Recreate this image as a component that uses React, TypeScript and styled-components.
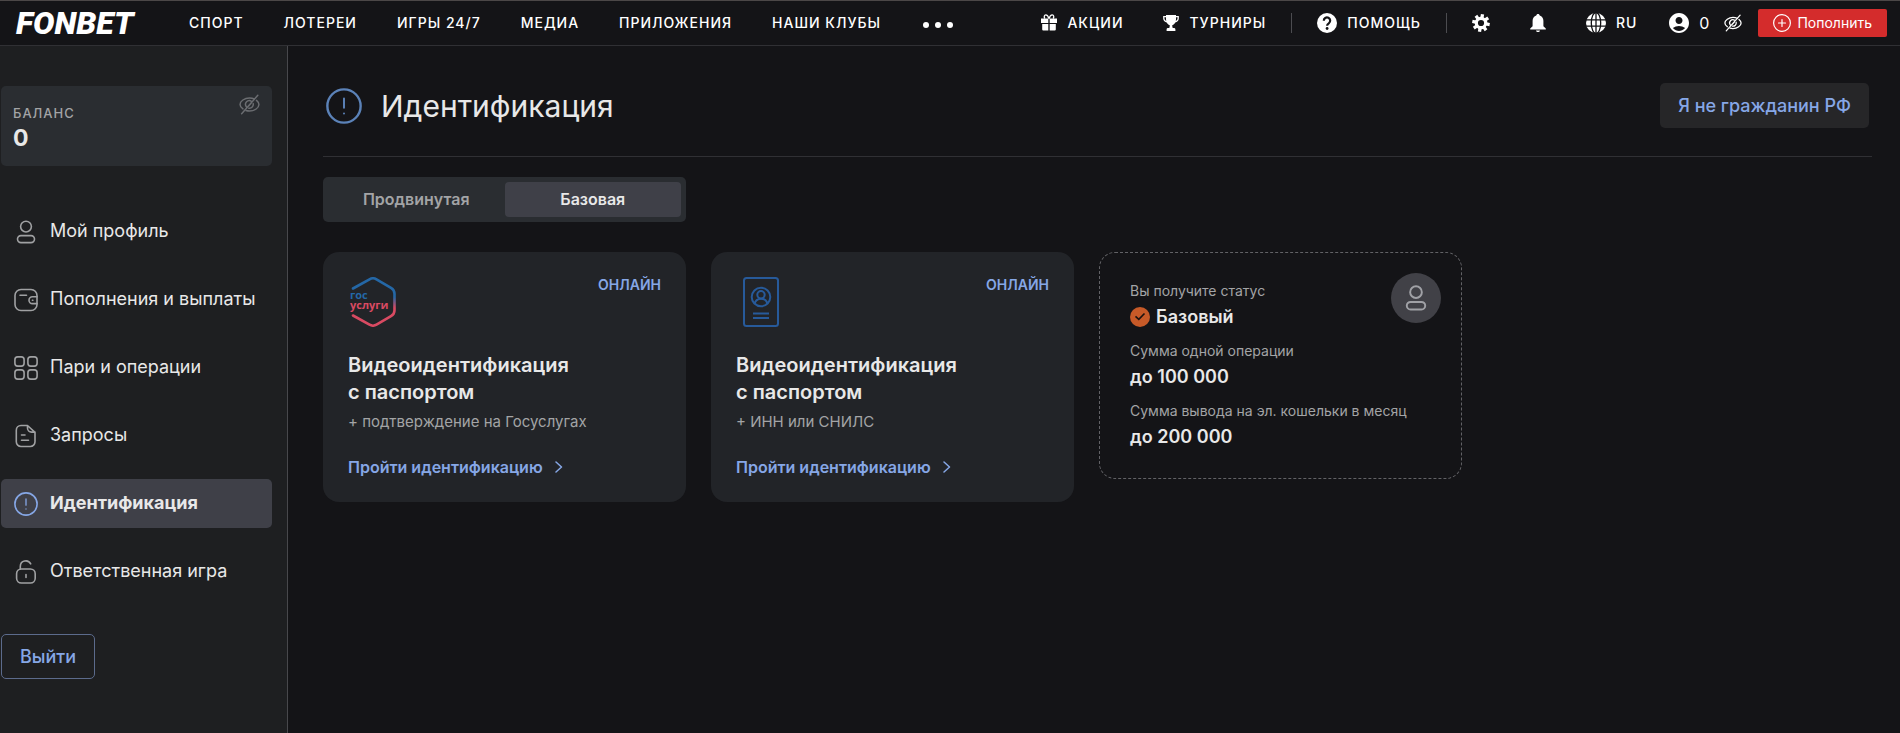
import React from 'react';
import styled, { createGlobalStyle } from 'styled-components';
import { MdAccountCircle } from 'react-icons/md';

const c = {
  page: '#141417',
  side: '#1e1f21',
  card: '#222428',
  panel: '#2a2d31',
  active: '#3f4048',
  line: '#303034',
  text: '#e8e8e8',
  muted: '#a3a4a6',
  blue: '#86a7e6',
  red: '#d42c2c',
};

const GlobalStyle = createGlobalStyle`
  *, *::before, *::after { box-sizing: border-box; }
  body { margin: 0; background: ${c.page}; color: ${c.text}; font-family: Inter, "Noto Sans", sans-serif; }
  h1, h2, p, ul, dl, dd { margin: 0; padding: 0; }
  ul { list-style: none; }
  button { font-family: inherit; border: 0; background: none; padding: 0; cursor: pointer; }
  a { color: inherit; text-decoration: none; }
  svg { display: block; flex: none; }
`;

const Page = styled.div`
  min-height: 100vh;
  display: flex;
  flex-direction: column;
`;

const Header = styled.header`
  display: flex;
  align-items: center;
  height: 46px;
  padding: 0 13px 1px 16px;
  border-top: 1px solid #4b4747;
  border-bottom: 1px solid ${c.line};
  color: #fff;
  white-space: nowrap;
`;

const Logo = styled.a`
  width: 153px;
  font-family: Roboto, sans-serif;
  font-size: 32px;
  line-height: 36px;
  font-weight: 900;
  font-style: italic;
`;

const NavList = styled.ul`
  display: flex;
  align-items: center;
`;

const NavLink = styled.a`
  display: flex;
  align-items: center;
  gap: 10px;
  height: 42px;
  padding: 0 20px;
  font-size: 14px;
  line-height: 20px;
  font-weight: 500;
  letter-spacing: 1px;
`;

const MoreButton = styled.button`
  display: flex;
  padding: 4px 22px 0;
  color: #fff;
`;

const Tools = styled.div`
  display: flex;
  align-items: center;
  margin-left: auto;
`;

const Divider = styled.span`
  width: 1px;
  height: 20px;
  margin: 0 5px;
  background: #4c4c50;
`;

const IconButton = styled.button`
  display: flex;
  padding: 0 20px;
  color: #fff;
`;

const Account = styled.div`
  display: flex;
  align-items: center;
  gap: 8px;
  padding: 0 15px 0 10px;
  font-size: 16px;
`;

const BareButton = styled.button<{ $tone?: string }>`
  display: flex;
  color: ${(p) => p.$tone || '#fff'};
`;

const DepositButton = styled.button`
  display: flex;
  align-items: center;
  gap: 6px;
  height: 28px;
  margin-left: 16px;
  padding: 0 15px;
  border-radius: 2px;
  background: ${c.red};
  color: #fff;
  font-size: 14px;
  font-weight: 400;
`;

const Body = styled.div`
  flex: 1;
  display: flex;
`;

const Sidebar = styled.aside`
  flex: 0 0 288px;
  padding: 40px 15px 40px 1px;
  background: ${c.side};
  border-right: 1px solid #48484c;
`;

const Balance = styled.section`
  display: flex;
  justify-content: space-between;
  align-items: flex-start;
  height: 80px;
  padding: 8px 12px;
  border-radius: 5px;
  background: ${c.panel};
`;

const BalanceText = styled.div`
  padding-top: 10px;
`;

const BalanceLabel = styled.p`
  font-size: 13px;
  line-height: 18px;
  font-weight: 500;
  letter-spacing: 1px;
  color: ${c.muted};
`;

const BalanceValue = styled.p`
  font-size: 23px;
  line-height: 32px;
  font-weight: 700;
`;

const Menu = styled.ul`
  display: flex;
  flex-direction: column;
  gap: 19px;
  margin: 41px 0 38px;
`;

const MenuLink = styled.a<{ $active?: boolean }>`
  display: flex;
  align-items: center;
  gap: 12px;
  height: 49px;
  padding: 0 13px;
  border-radius: 5px;
  background: ${(p) => (p.$active ? c.active : 'transparent')};
  font-size: 18px;
  font-weight: ${(p) => (p.$active ? 700 : 400)};
  svg { color: ${(p) => (p.$active ? c.blue : '#a0a1a3')}; }
`;

const MenuLabel = styled.span`
  padding-bottom: 2px;
  line-height: 24px;
`;

const LogoutButton = styled.button`
  height: 45px;
  padding: 0 18px;
  border: 1px solid #5c6b8c;
  border-radius: 5px;
  color: ${c.blue};
  font-size: 18px;
  font-weight: 500;
`;

const Main = styled.main`
  flex: 1;
  min-width: 0;
  padding: 0 28px 40px 35px;
`;

const TitleBar = styled.div`
  display: flex;
  align-items: center;
  gap: 19px;
  height: 111px;
  padding: 9px 3px 0;
  border-bottom: 1px solid ${c.line};
  svg { color: #5b82b8; }
`;

const Title = styled.h1`
  font-size: 30px;
  line-height: 36px;
  font-weight: 400;
`;

const SoftButton = styled.button`
  height: 45px;
  margin-left: auto;
  padding: 0 18px;
  border-radius: 5px;
  background: #262628;
  color: ${c.blue};
  font-size: 18px;
  font-weight: 500;
`;

const Tabs = styled.div`
  display: grid;
  grid-template-columns: 1fr 1fr;
  max-width: 363px;
  height: 45px;
  margin: 20px 0 30px;
  padding: 5px;
  border-radius: 5px;
  background: ${c.panel};
`;

const Tab = styled.button<{ $active?: boolean }>`
  padding-bottom: 2px;
  border-radius: 4px;
  background: ${(p) => (p.$active ? c.active : 'transparent')};
  color: ${(p) => (p.$active ? c.text : c.muted)};
  font-size: 16px;
  font-weight: 600;
`;

const Cards = styled.div`
  display: grid;
  grid-template-columns: repeat(3, minmax(0, 363px));
  align-items: start;
  gap: 25px;
`;

const Card = styled.article`
  height: 250px;
  padding: 25px;
  border-radius: 16px;
  background: ${c.card};
`;

const CardTop = styled.div`
  display: flex;
  justify-content: space-between;
  align-items: flex-start;
  height: 75px;
`;

const Badge = styled.span`
  font-size: 14px;
  line-height: 16px;
  font-weight: 600;
  color: ${c.blue};
`;

const CardTitle = styled.h2`
  font-size: 20px;
  line-height: 27px;
  font-weight: 600;
`;

const CardNote = styled.p`
  margin-top: 6px;
  font-size: 15px;
  line-height: 20px;
  color: ${c.muted};
`;

const CardLink = styled.a`
  display: flex;
  align-items: center;
  gap: 12px;
  margin-top: 25px;
  font-size: 16px;
  line-height: 20px;
  font-weight: 600;
  color: ${c.blue};
`;

const StatusCard = styled.section`
  position: relative;
  height: 227px;
  padding: 28px 30px;
  border: 1px dashed #626266;
  border-radius: 16px;
`;

const FactLabel = styled.dt`
  font-size: 14px;
  line-height: 20px;
  color: ${c.muted};
`;

const FactValue = styled.dd`
  && { margin: 3px 0 11px; }
  display: flex;
  align-items: center;
  gap: 6px;
  font-size: 18px;
  line-height: 26px;
  font-weight: 600;
`;

const Avatar = styled.span`
  position: absolute;
  top: 20px;
  right: 20px;
  display: flex;
  align-items: center;
  justify-content: center;
  width: 50px;
  height: 50px;
  border-radius: 50%;
  background: #414147;
  color: #a0a1a6;
`;

type IconProps = { size?: number; w?: number };

const stroke = (w = 1.6) => ({
  fill: 'none',
  stroke: 'currentColor',
  strokeWidth: w,
  strokeLinecap: 'round' as const,
  strokeLinejoin: 'round' as const,
});

const UserIcon = ({ size = 24, w = 1.6 }: IconProps) => (
  <svg width={size} height={size} viewBox="0 0 24 24" {...stroke(w)}>
    <circle cx="12" cy="6.6" r="5.4" />
    <rect x="3.5" y="15.6" width="17" height="7" rx="3.5" />
  </svg>
);

const WalletIcon = () => (
  <svg width="24" height="24" viewBox="0 0 24 24" {...stroke()}>
    <rect x="1" y="1.5" width="22" height="21" rx="6" />
    <path d="M6 7.2h6.5M23 8.8h-4.6a3.4 3.4 0 0 0 0 6.8H23M18.4 12.2h.5" />
  </svg>
);

const GridIcon = () => (
  <svg width="24" height="24" viewBox="0 0 24 24" {...stroke()}>
    <rect x=".9" y=".9" width="9.2" height="9.2" rx="2.8" />
    <rect x="13.9" y=".9" width="9.2" height="9.2" rx="2.8" />
    <rect x=".9" y="13.9" width="9.2" height="9.2" rx="2.8" />
    <rect x="13.9" y="13.9" width="9.2" height="9.2" rx="2.8" />
  </svg>
);

const DocIcon = () => (
  <svg width="24" height="24" viewBox="0 0 24 24" {...stroke()}>
    <path d="M13.5 1.5H7A4.7 4.7 0 0 0 2.3 6.2v11.6A4.7 4.7 0 0 0 7 22.5h9.3a4.7 4.7 0 0 0 4.7-4.7V8.3zM13.5 1.5v2.6a4 4 0 0 0 4 4H21M7.5 11H11M7.5 16.2h7" />
  </svg>
);

const AlertIcon = ({ size = 24, w = 1.6 }: IconProps) => (
  <svg width={size} height={size} viewBox="0 0 24 24" {...stroke(w)}>
    <circle cx="12" cy="12" r="11.1" />
    <path d="M12 7v6.200M12 16.900v.1" strokeWidth="1.3" />
  </svg>
);

const LockIcon = () => (
  <svg width="24" height="24" viewBox="0 0 24 24" {...stroke()}>
    <rect x="2.6" y="9" width="18.6" height="14" rx="4.8" />
    <path d="M6.3 9V6.400a5.500 5.500 0 0 1 10.400-2.500M12 14.500v3" />
  </svg>
);

const HiddenIcon = ({ size = 20 }: IconProps) => (
  <svg width={size} height={size} viewBox="0 0 24 24" {...stroke(1.7)}>
    <path d="M20 7.300c1.700 1.400 2.800 3.100 2.800 4.700 0 3.700-5 7.500-10.800 7.500-1.400 0-2.800-.2-4-.6M4.500 17C2.400 15.600 1.200 13.700 1.200 12c0-3.700 5-7.500 10.800-7.500 2 0 3.900.4 5.500 1.200" />
    <path d="M8.400 14.500a4.300 4.300 0 0 1 5.800-6.200M16.200 11a4.300 4.300 0 0 1-5 5.200M21.500 1.500L3 22.500M13.800 10.600L11 13.600" />
  </svg>
);

const GiftIcon = () => (
  <svg width="16" height="17" viewBox="0 0 16 17" fill="currentColor">
    <path d="M0 4.500h7.300V9H0zM8.700 4.500H16V9H8.700zM1.200 10h6.100v6.500h-5a1.100 1.100 0 0 1-1.100-1.100zM8.700 10h6.100v5.400a1.100 1.100 0 0 1-1.100 1.100h-5z" />
    <path d="M7.800 4.600C7.200 2.300 6 .9 4.800.9 3.300.9 2.600 2.800 3.900 4.500M8.200 4.600C8.800 2.300 10 .9 11.200.9c1.500 0 2.200 1.900.9 3.600" fill="none" stroke="currentColor" strokeWidth="1.3" />
  </svg>
);

const TrophyIcon = () => (
  <svg width="16" height="16" viewBox="0 0 16 16" fill="currentColor">
    <path d="M3 0h10v4.500c0 2.800-1.700 5.200-3.900 5.900l.6 2.600h1.200c.9 0 1.500.6 1.500 1.400V16H3.600v-1.600c0-.8.6-1.400 1.500-1.400h1.200l.6-2.600C4.700 9.700 3 7.300 3 4.500z" />
    <path d="M3.500 1.700H.8v1.500c0 1.900 1.300 3.200 3.400 3.600M12.500 1.700h2.700v1.500c0 1.900-1.300 3.200-3.400 3.600" fill="none" stroke="currentColor" strokeWidth="1.300" />
  </svg>
);

const HelpIcon = () => (
  <svg width="20" height="20" viewBox="0 0 20 20">
    <circle cx="10" cy="10" r="10" fill="currentColor" />
    <path d="M6.800 7.800a3.200 3.200 0 1 1 5 2.500c-1 .7-1.700 1.200-1.700 2.400" fill="none" stroke={c.page} strokeWidth="2.200" />
    <circle cx="10.100" cy="15.500" r="1.400" fill={c.page} />
  </svg>
);

const GearIcon = () => (
  <svg width="18" height="18" viewBox="0 0 18 18" fill="none" stroke="currentColor">
    <circle cx="9" cy="9" r="4.700" strokeWidth="3.200" />
    {[0, 45, 90, 135, 180, 225, 270, 315].map((a) => (
      <path key={a} d="M9 .2v3.500" strokeWidth="3.300" transform={`rotate(${a + 10} 9 9)`} />
    ))}
  </svg>
);

const BellIcon = () => (
  <svg width="16" height="18" viewBox="0 0 16 18" fill="currentColor">
    <path d="M8 0c1 0 1.600.6 1.700 1.500 2.300.7 3.700 2.700 3.700 5.300v5.400l2.400 2.300v1H.2v-1l2.400-2.300V6.800c0-2.600 1.400-4.600 3.700-5.300C6.400.6 7 0 8 0zM6 16.400h4c-.2 1-1 1.600-2 1.600s-1.800-.6-2-1.600z" />
  </svg>
);

const GlobeIcon = () => (
  <svg width="20" height="20" viewBox="0 0 20 20">
    <circle cx="10" cy="10" r="10" fill="currentColor" />
    <g fill="none" stroke={c.page} strokeWidth="1.3">
      <ellipse cx="10" cy="10" rx="4.700" ry="10.500" />
      <path d="M10 0v20M0 6.800h20M0 13.200h20" />
    </g>
  </svg>
);

const PlusIcon = () => (
  <svg width="18" height="18" viewBox="0 0 18 18" {...stroke(1.2)}>
    <circle cx="9" cy="9" r="8.400" />
    <path d="M9 5.500v7M5.500 9h7" />
  </svg>
);

const DotsIcon = () => (
  <svg width="30" height="6" viewBox="0 0 30 6" fill="currentColor">
    <circle cx="3" cy="3" r="3" />
    <circle cx="15" cy="3" r="3" />
    <circle cx="27" cy="3" r="3" />
  </svg>
);

const ChevronIcon = () => (
  <svg width="8" height="12" viewBox="0 0 8 12" {...stroke(1.5)}>
    <path d="M1 1l5.500 5L1 11" />
  </svg>
);

const CheckIcon = () => (
  <svg width="20" height="20" viewBox="0 0 20 20">
    <circle cx="10" cy="10" r="10" fill="#c75a28" />
    <path d="M5.500 9.300l3.300 3L14.500 6.500" fill="none" stroke="#1b1210" strokeWidth="1.600" />
  </svg>
);

const GosuslugiIcon = () => (
  <svg width="50" height="50" viewBox="0 0 50 50">
    <defs>
      <linearGradient id="gos" x1="0" y1="0" x2="0" y2="50" gradientUnits="userSpaceOnUse">
        <stop offset=".4" stopColor="#2467a6" />
        <stop offset=".62" stopColor="#d94a62" />
      </linearGradient>
    </defs>
    <path
      d="M5 11.500L21.500 2.300q3.500-2 7 0L43 10.800q3.500 2 3.500 6v16.400q0 4-3.500 6L28.500 47.700q-3.500 2-7 0L5 38.500"
      fill="none"
      stroke="url(#gos)"
      strokeWidth="2.600"
      strokeLinecap="round"
    />
    <g fontFamily="'Open Sans', sans-serif" fontWeight="700" fontSize="11">
      <text x="2" y="22" fill="#2467a6">гос</text>
      <text x="2" y="32" fill="#d94a62">услуги</text>
    </g>
  </svg>
);

const PassportIcon = () => (
  <svg width="50" height="50" viewBox="0 0 50 50" fill="none" stroke="#275a9a" strokeWidth="2">
    <rect x="8" y="1" width="34" height="48" rx="2.500" />
    <circle cx="25" cy="20" r="9.300" />
    <circle cx="25" cy="17.800" r="3.700" />
    <path d="M18.500 27c.8-3.500 3.300-5.300 6.500-5.300s5.700 1.800 6.500 5.300M17 36.500h16M17 41h16" />
  </svg>
);

const nav = ['Спорт', 'Лотереи', 'Игры 24/7', 'Медиа', 'Приложения', 'Наши клубы'];

const menu = [
  { label: 'Мой профиль', icon: <UserIcon /> },
  { label: 'Пополнения и выплаты', icon: <WalletIcon /> },
  { label: 'Пари и операции', icon: <GridIcon /> },
  { label: 'Запросы', icon: <DocIcon /> },
  { label: 'Идентификация', icon: <AlertIcon />, active: true },
  { label: 'Ответственная игра', icon: <LockIcon /> },
];

const methods = [
  { icon: <GosuslugiIcon />, note: '+ подтверждение на Госуслугах' },
  { icon: <PassportIcon />, note: '+ ИНН или СНИЛС' },
];

export default function App() {
  return (
    <Page>
      <GlobalStyle />
      <Header>
        <Logo href="#">FONBET</Logo>
        <nav>
          <NavList>
            {nav.map((n) => (
              <li key={n}>
                <NavLink href="#">{n.toUpperCase()}</NavLink>
              </li>
            ))}
            <li>
              <MoreButton aria-label="Ещё">
                <DotsIcon />
              </MoreButton>
            </li>
          </NavList>
        </nav>
        <Tools>
          <NavLink href="#">
            <GiftIcon />
            АКЦИИ
          </NavLink>
          <NavLink href="#">
            <TrophyIcon />
            ТУРНИРЫ
          </NavLink>
          <Divider />
          <NavLink href="#">
            <HelpIcon />
            ПОМОЩЬ
          </NavLink>
          <Divider />
          <IconButton aria-label="Настройки">
            <GearIcon />
          </IconButton>
          <IconButton aria-label="Уведомления">
            <BellIcon />
          </IconButton>
          <NavLink href="#">
            <GlobeIcon />
            RU
          </NavLink>
          <Account>
            <MdAccountCircle size={24} />
            <span>0</span>
          </Account>
          <BareButton aria-label="Скрыть баланс">
            <HiddenIcon size={18} />
          </BareButton>
          <DepositButton>
            <PlusIcon />
            Пополнить
          </DepositButton>
        </Tools>
      </Header>
      <Body>
        <Sidebar>
          <Balance>
            <BalanceText>
              <BalanceLabel>БАЛАНС</BalanceLabel>
              <BalanceValue>0</BalanceValue>
            </BalanceText>
            <BareButton aria-label="Скрыть баланс" $tone="#6b6d71">
              <HiddenIcon size={21} />
            </BareButton>
          </Balance>
          <nav>
            <Menu>
              {menu.map((m) => (
                <li key={m.label}>
                  <MenuLink href="#" $active={m.active}>
                    {m.icon}
                    <MenuLabel>{m.label}</MenuLabel>
                  </MenuLink>
                </li>
              ))}
            </Menu>
          </nav>
          <LogoutButton>Выйти</LogoutButton>
        </Sidebar>
        <Main>
          <TitleBar>
            <AlertIcon size={36} />
            <Title>Идентификация</Title>
            <SoftButton>Я не гражданин РФ</SoftButton>
          </TitleBar>
          <Tabs role="tablist">
            <Tab role="tab" aria-selected={false}>Продвинутая</Tab>
            <Tab role="tab" aria-selected $active>Базовая</Tab>
          </Tabs>
          <Cards>
            {methods.map((m) => (
              <Card key={m.note}>
                <CardTop>
                  {m.icon}
                  <Badge>ОНЛАЙН</Badge>
                </CardTop>
                <CardTitle>
                  Видеоидентификация
                  <br />с паспортом
                </CardTitle>
                <CardNote>{m.note}</CardNote>
                <CardLink href="#">
                  Пройти идентификацию
                  <ChevronIcon />
                </CardLink>
              </Card>
            ))}
            <StatusCard>
              <dl>
                <FactLabel>Вы получите статус</FactLabel>
                <FactValue>
                  <CheckIcon />
                  Базовый
                </FactValue>
                <FactLabel>Сумма одной операции</FactLabel>
                <FactValue>до 100 000</FactValue>
                <FactLabel>Сумма вывода на эл. кошельки в месяц</FactLabel>
                <FactValue>до 200 000</FactValue>
              </dl>
              <Avatar>
                <UserIcon size={26} w={1.8} />
              </Avatar>
            </StatusCard>
          </Cards>
        </Main>
      </Body>
    </Page>
  );
}
